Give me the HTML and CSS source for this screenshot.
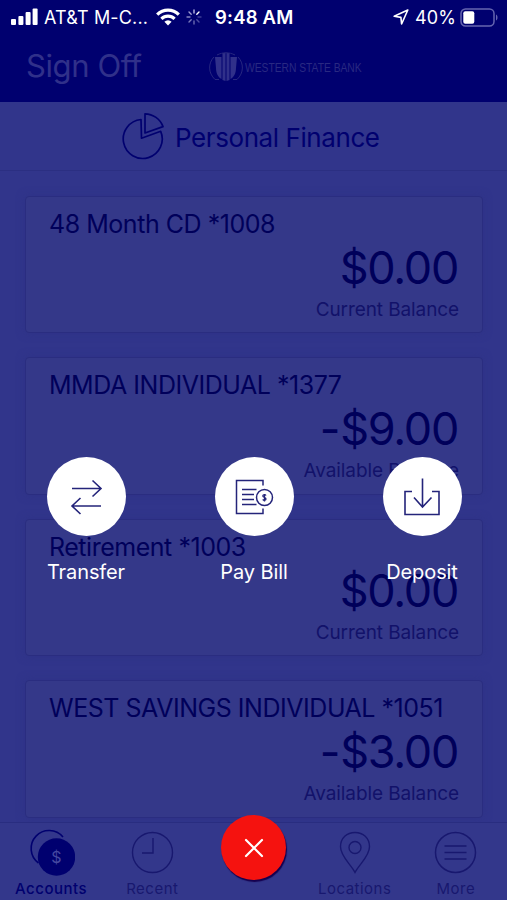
FILE: index.html
```html
<!DOCTYPE html>
<html lang="en">
<head>
<meta charset="utf-8">
<title>Accounts</title>
<link rel="stylesheet" href="styles.css">
</head>
<body>
<div class="phone">
  <header class="top">
    <div class="status">
      <svg class="signal" width="27" height="18" viewBox="0 0 27 18" fill="#fff"><rect x="0" y="11" width="5" height="6" rx="1"/><rect x="7.4" y="8" width="5" height="9" rx="1"/><rect x="14.6" y="4" width="5" height="13" rx="1"/><rect x="21.6" y="0.5" width="5" height="16.5" rx="1"/></svg>
      <span class="carrier">AT&amp;T M-C...</span>
      <svg class="wifi" width="24" height="18" viewBox="0 0 24 18" fill="none" stroke="#fff" stroke-width="3.2"><path d="M1.2 6.6a15.3 15.3 0 0 1 21.6 0"/><path d="M5.4 10.8a9.4 9.4 0 0 1 13.2 0"/><path d="M12 17.5l-3.6-3.7a5 5 0 0 1 7.2 0z" fill="#fff" stroke="none"/></svg>
      <svg class="spinner" width="16" height="16" viewBox="-8 -8 16 16" stroke-width="1.4" stroke-linecap="round"><path d="M0-4V-7" stroke="#b6b6e2"/><path d="M2.8-2.8L5-5" stroke="#fff"/><path d="M4 0H7" stroke="#3d3d97"/><path d="M2.8 2.8L5 5" stroke="#4c4ca0"/><path d="M0 4V7" stroke="#6969b0"/><path d="M-2.8 2.8L-5 5" stroke="#7979ba"/><path d="M-4 0H-7" stroke="#8484c0"/><path d="M-2.8-2.8L-5-5" stroke="#9d9dd0"/></svg>
      <span class="time">9:48 AM</span>
      <svg class="arrow" width="16" height="16" viewBox="0 0 16 16" fill="none" stroke="#fff" stroke-width="1.6" stroke-linejoin="round"><path d="M14.800 1L1.200 7.300l6.700 1.100.7 6.600z"/></svg>
      <span class="percent">40%</span>
      <svg class="battery" width="39" height="19" viewBox="0 0 39 19"><rect x="1" y="1" width="33" height="17" rx="4.5" fill="none" stroke="#6565b0" stroke-width="1.5"/><rect x="3.3" y="3.3" width="11" height="12.4" rx="2" fill="#fff"/><path d="M36 6.5c2 1 2 5 0 6z" fill="#6565b0"/></svg>
    </div>
    <div class="nav">
      <span class="signoff">Sign Off</span>
      <svg class="emblem" width="34" height="30" viewBox="0 0 34 30" fill="#30308a"><path d="M6 5H12.500v22C9 25 7 21 7 16zM28 5H21.500v22c3.500-2 5.500-6 5.500-11zM13.500 1h3v28l-3-1zM17.500 1h3v27l-3 1z"/><path d="M8 3C14 0 20 0 26 3" fill="none" stroke="#272780"/><path d="M5 5C-1 11-1 21 6 27.500H10M29 5c6 6 6 16-1 22.500H24" fill="none" stroke="#272780"/></svg>
      <span class="bank">WESTERN STATE BANK</span>
    </div>
  </header>
  <div class="section">
    <svg width="44" height="48" viewBox="0 0 44 48" fill="none" stroke="#00006f" stroke-width="1.7" stroke-linejoin="round"><path d="M21 7.500A19.500 19.500 0 1 0 40.700 19.300L21.500 26.200z"/><path d="M25 1.800V21L43 14.600A19.500 19.500 0 0 0 25 1.800z"/></svg>
    <h1>Personal Finance</h1>
  </div>
  <main class="cards">
    <article class="card"><h2>48 Month CD *1008</h2><div class="amount">$0.00</div><div class="label">Current Balance</div></article>
    <article class="card"><h2>MMDA INDIVIDUAL *1377</h2><div class="amount"><span class="minus">-</span>$9.00</div><div class="label">Available Balance</div></article>
    <article class="card"><h2>Retirement *1003</h2><div class="amount">$0.00</div><div class="label">Current Balance</div></article>
    <article class="card"><h2>WEST SAVINGS INDIVIDUAL *1051</h2><div class="amount"><span class="minus">-</span>$3.00</div><div class="label">Available Balance</div></article>
  </main>
  <footer class="tabs">
    <div class="tab active"><svg width="48" height="48" viewBox="0 0 48 48"><path d="M11.500 35A18 18 0 1 1 36 9" fill="none" stroke="#00006f" stroke-width="1.6"/><circle cx="29.500" cy="29" r="18.700" fill="#00006f"/><text x="29.500" y="34.500" text-anchor="middle" class="coin">$</text></svg><span>Accounts</span></div>
    <div class="tab"><svg width="48" height="48" viewBox="0 0 48 48" fill="none" stroke="#18186f" stroke-width="1.4"><circle cx="24.500" cy="24.500" r="20"/><path d="M25 10V25H14"/></svg><span>Recent</span></div>
    <div class="tab"></div>
    <div class="tab"><svg width="48" height="48" viewBox="0 0 48 48" fill="none" stroke="#18186f" stroke-width="1.4"><path d="M25 44.500C21 36.500 10.500 28.500 10.500 18.800C10.500 10 17 4.500 25 4.500S39.500 10 39.500 18.800C39.500 28.500 29 36.500 25 44.500z"/><circle cx="25" cy="19.500" r="6"/></svg><span>Locations</span></div>
    <div class="tab"><svg width="48" height="48" viewBox="0 0 48 48" fill="none" stroke="#18186f" stroke-width="1.500"><circle cx="24.500" cy="24.500" r="20"/><path d="M13.500 18H35.500M13.500 24.500H35.500M13.500 31H35.500"/></svg><span>More</span></div>
  </footer>
  <div class="actions">
    <div class="action"><div class="disc"><svg width="40" height="40" viewBox="0 0 40 40" fill="none" stroke="#24247a" stroke-width="1.600"><path d="M6 11.500H35M26.500 3.500L35 11.500L26.500 19.500M35 29H6M14.500 21L6 29L14.500 37"/></svg></div><span>Transfer</span></div>
    <div class="action"><div class="disc"><svg width="40" height="40" viewBox="0 0 40 40" fill="none" stroke="#24247a" stroke-width="1.500"><path d="M29 8.500V3.500H2.500V36.500H29V31.500M8 12.500H22.500M8 17.500H20M8 22.500H20M8 27.500H22.500"/><circle cx="30.500" cy="20.500" r="8"/><path d="M32 18.500c-.8-1.400-3.200-1-3.200.5 0 1.600 3.200 1.300 3.200 3 0 1.600-2.600 1.600-3.200.4M30.500 17v7.500" stroke-width="1.300"/></svg></div><span>Pay Bill</span></div>
    <div class="action"><div class="disc"><svg width="40" height="40" viewBox="0 0 40 40" fill="none" stroke="#24247a" stroke-width="1.600"><path d="M10 14.500H3V37.500H37V14.500H30M20.500 1.500V30M12 20.500L20.500 30L29.500 20.500"/></svg></div><span>Deposit</span></div>
  </div>
  <div class="close"><svg width="24" height="24" viewBox="0 0 24 24" stroke="#fff" stroke-width="2.200" stroke-linecap="round"><path d="M4 4L20 20M20 4L4 20"/></svg></div>
</div>
</body>
</html>
```
FILE: styles.css
```css
* { box-sizing: border-box; }
body { margin: 0; font-family: Inter, "Liberation Sans", sans-serif; }
svg { display: block; flex: none; }
h1, h2 { margin: 0; font-weight: 400; }
.phone { position: relative; width: 507px; height: 900px; overflow: hidden; background: #31358b; display: flex; flex-direction: column; }
.top { height: 102px; flex: none; background: #00006f; color: #fff; }
.status { height: 34px; display: flex; align-items: center; padding-left: 11px; font-size: 18px; white-space: nowrap; }
.carrier { width: 111px; margin-left: 6px; letter-spacing: 0.15px; }
.wifi { margin-left: 1px; }
.spinner { margin-left: 6px; }
.time { width: 84px; margin-left: 13px; font-size: 18.500px; font-weight: 600; letter-spacing: 0.2px; }
.arrow { margin-left: 94px; }
.percent { width: 41px; margin-left: 6px; letter-spacing: 0.1px; }
.battery { margin-left: 4px; }
.nav { height: 68px; display: flex; align-items: center; padding: 0 0 5px 26px; color: #30308a; }
.signoff { width: 183px; font-size: 31px; font-weight: 400; letter-spacing: -0.4px; }
.emblem { margin-top: 3px; }
.bank { margin: 3px 0 0 2px; font-family: "Liberation Sans", sans-serif; font-size: 13px; color: #292982; white-space: nowrap; transform: scaleX(0.79); transform-origin: left; }
.section { height: 69px; flex: none; display: flex; align-items: center; padding-left: 120px; gap: 11px; border-bottom: 1px solid #2b2f82; color: #00006f; }
.section h1 { font-size: 26px; margin-top: 2px; white-space: nowrap; letter-spacing: -0.42px; }
.cards { height: 651px; flex: none; padding: 24.500px 24px 0 25px; display: flex; flex-direction: column; gap: 24px; }
.card { height: 137.500px; flex: none; border: 1px solid #2a2d80; border-radius: 4px; background: #343889; box-shadow: 0 0 8px #2e3286; padding: 10px 23px 0 23px; color: #00005a; }
.card h2 { font-size: 25px; line-height: 34px; white-space: nowrap; letter-spacing: -0.47px; }
.amount { font-size: 45px; line-height: 53px; height: 54px; padding-right: 1px; text-align: right; white-space: nowrap; letter-spacing: -1.3px; }
.minus { margin-right: 1px; }
.label { font-size: 19px; line-height: 30px; text-align: right; color: #12126a; letter-spacing: -0.1px; }
.tabs { height: 79px; flex: none; display: grid; grid-template-columns: repeat(5, 101.200px); border-top: 1px solid #292d80; background: #33378b; }
.tab { display: flex; flex-direction: column; align-items: center; padding-top: 5px; color: #18186f; font-size: 15px; line-height: 25px; letter-spacing: 0.5px; }
.tab span { padding-left: 1px; }
.tab.active { color: #00006f; font-weight: 500; }
.coin { font-size: 16px; fill: #4548a0; font-weight: 400; letter-spacing: 0; }
.actions { position: absolute; left: 2px; right: 1px; top: 457px; display: grid; grid-template-columns: repeat(3, 168px); color: #fff; }
.action { display: flex; flex-direction: column; align-items: center; font-size: 20px; line-height: 28px; gap: 22px; letter-spacing: -0.1px; }
.disc { width: 79px; height: 79px; border-radius: 50%; background: #fff; display: grid; place-items: center; }
.close { position: absolute; left: 221px; top: 815px; width: 65px; height: 65px; border-radius: 50%; background: #f5120f; box-shadow: 1px 2px 1px #15004f; display: grid; place-items: center; }
```
